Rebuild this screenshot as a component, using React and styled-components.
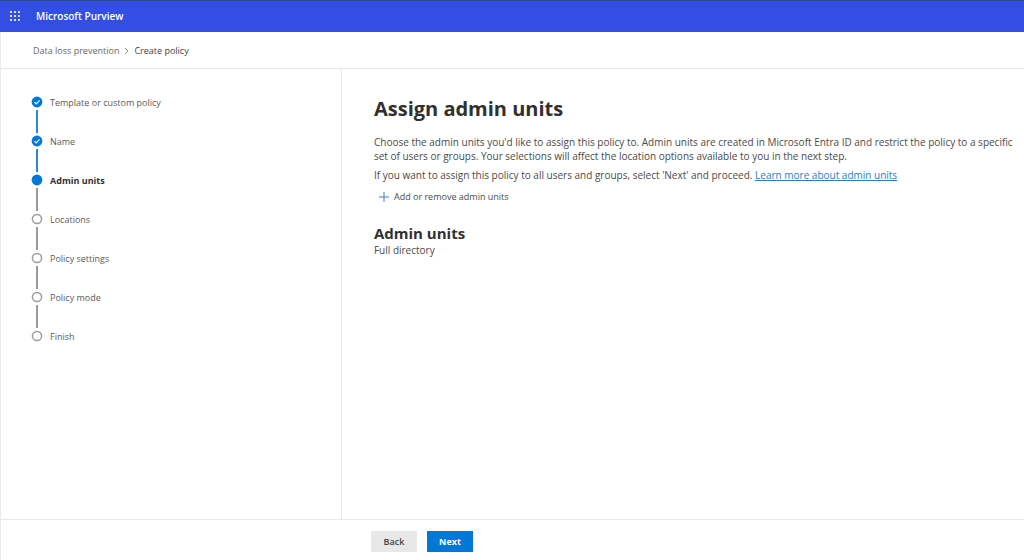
import React from "react"
import styled, { createGlobalStyle } from "styled-components"

const GlobalStyle = createGlobalStyle`
  * {
    box-sizing: border-box;
  }
  body {
    background-color: #fff;
    color: #4c4a47;
    font-family: "Open Sans", "Noto Sans", sans-serif;
    font-size: 10px;
    line-height: 14px;
    margin: 0;
  }
`

const Page = styled.div`
  border-left: 1px solid #ebebeb;
  display: flex;
  flex-direction: column;
  min-height: 100vh;
`

const Header = styled.header`
  align-items: center;
  background-color: #334fe3;
  border-top: 1px solid #2a4a8c;
  color: #fff;
  display: flex;
  gap: 14px;
  height: 32px;
  margin-left: -1px;
  padding: 0 8px 2px;
`

const WaffleButton = styled.button`
  background: none;
  border: 0;
  color: inherit;
  cursor: pointer;
  display: flex;
  padding: 1px;
`

const Brand = styled.span`
  font-size: 10px;
  font-weight: 600;
`

const Breadcrumb = styled.nav`
  align-items: center;
  border-bottom: 1px solid #e9e9e9;
  display: flex;
  font-size: 9px;
  gap: 5px;
  height: 37px;
  padding: 1px 32px 0;
`

const Crumb = styled.a`
  color: ${props => props.$current ? "#44423f" : "#6a6865"};
  text-decoration: none;
`

const Body = styled.div`
  display: flex;
  flex: 1;
`

const Sidebar = styled.aside`
  border-right: 1px solid #e9e9e9;
  flex: 0 0 33.33%;
  padding: 27px 30px;
`

const StepList = styled.ol`
  list-style: none;
  margin: 0;
  padding: 0;
`

const Step = styled.li`
  color: ${props => props.$active ? "#33312f" : "#5c5a57"};
  display: flex;
  font-size: 9px;
  font-weight: ${props => props.$active ? 700 : 400};
  gap: 7px;
`

const Track = styled.div`
  align-items: center;
  display: flex;
  flex-direction: column;
  gap: 2px;
  padding-bottom: 2px;
  svg {
    display: block;
  }
`

const Connector = styled.span`
  background-color: ${props => props.$done ? "#2b87d8" : "#9a9a9a"};
  height: 23px;
  width: 2px;
`

const Main = styled.main`
  flex: 1;
  min-width: 0;
  padding: 26px 8px 26px 32px;
`

const Title = styled.h1`
  color: #32302e;
  font-size: 20px;
  font-weight: 700;
  line-height: 28px;
  margin: 0 0 12px;
`

const Text = styled.p`
  margin: 0 0 5px;
`

const Link = styled.a`
  color: #2b7cc9;
  text-decoration: underline;
`

const AddButton = styled.button`
  align-items: center;
  background: none;
  border: 0;
  color: inherit;
  cursor: pointer;
  display: flex;
  font-family: inherit;
  font-size: 9px;
  gap: 4px;
  line-height: 14px;
  padding: 3px 4px;
`

const Subtitle = styled.h2`
  color: #32302e;
  font-size: 15px;
  font-weight: 700;
  line-height: 20px;
  margin: 16px 0 0;
`

const Footer = styled.footer`
  border-top: 1px solid #e9e9e9;
  display: flex;
  gap: 10px;
  padding: 11px 0 8px calc(33.33% + 29px);
`

const Button = styled.button`
  background-color: ${props => props.$primary ? "#0078d7" : "#e8e8e8"};
  border: 0;
  color: ${props => props.$primary ? "#fff" : "#44423f"};
  cursor: pointer;
  font-family: inherit;
  font-size: 9px;
  font-weight: ${props => props.$primary ? 700 : 600};
  height: 21px;
  min-width: 46px;
  padding: 0 8px;
`

const steps = [
  { label: "Template or custom policy", status: "done" },
  { label: "Name", status: "done" },
  { label: "Admin units", status: "active" },
  { label: "Locations", status: "todo" },
  { label: "Policy settings", status: "todo" },
  { label: "Policy mode", status: "todo" },
  { label: "Finish", status: "todo" }
]

function WaffleIcon() {
  const dots = [1, 5, 9]
  return (
    <svg width="12" height="12" viewBox="0 0 12 12" fill="currentColor">
      {dots.map(y => dots.map(x => (
        <circle key={`${x}-${y}`} cx={x + 1} cy={y + 1} r="1.1" />
      )))}
    </svg>
  )
}

function StepIcon({ status }) {
  if (status === "todo") {
    return (
      <svg width="12" height="12" viewBox="0 0 12 12">
        <circle cx="6" cy="6" r="4.6" fill="#fff" stroke="#9c9c9c" strokeWidth="1.5" />
      </svg>
    )
  }
  return (
    <svg width="12" height="12" viewBox="0 0 12 12">
      <circle cx="6" cy="6" r="5.4" fill="#0078d7" />
      {status === "done" && (
        <path d="M3.4 6.2 5.2 7.9 8.6 4.4" fill="none" stroke="#fff" strokeWidth="1.1" />
      )}
    </svg>
  )
}

function App() {
  return (
    <>
      <GlobalStyle />
      <Page>
        <Header>
          <WaffleButton type="button" aria-label="App launcher">
            <WaffleIcon />
          </WaffleButton>
          <Brand>Microsoft Purview</Brand>
        </Header>
        <Breadcrumb aria-label="Breadcrumb">
          <Crumb href="#dlp">Data loss prevention</Crumb>
          <svg width="5" height="8" viewBox="0 0 5 8">
            <path d="M1 1 4 4 1 7" fill="none" stroke="#8a8886" strokeWidth="0.9" />
          </svg>
          <Crumb href="#create" $current aria-current="page">Create policy</Crumb>
        </Breadcrumb>
        <Body>
          <Sidebar>
            <StepList>
              {steps.map((step, index) => (
                <Step key={step.label} $active={step.status === "active"}>
                  <Track>
                    <StepIcon status={step.status} />
                    {index < steps.length - 1 && <Connector $done={step.status === "done"} />}
                  </Track>
                  {step.label}
                </Step>
              ))}
            </StepList>
          </Sidebar>
          <Main>
            <Title>Assign admin units</Title>
            <Text>
              Choose the admin units you'd like to assign this policy to. Admin units are created in Microsoft Entra ID and restrict the policy to a specific set of users or groups. Your selections will affect the location options available to you in the next step.
            </Text>
            <Text>
              If you want to assign this policy to all users and groups, select 'Next' and proceed. <Link href="#learn">Learn more about admin units</Link>
            </Text>
            <AddButton type="button">
              <svg width="12" height="12" viewBox="0 0 12 12">
                <path d="M6 1V11M1 6H11" fill="none" stroke="#4a7bc4" strokeWidth="1" />
              </svg>
              Add or remove admin units
            </AddButton>
            <Subtitle>Admin units</Subtitle>
            <Text>Full directory</Text>
          </Main>
        </Body>
        <Footer>
          <Button type="button">Back</Button>
          <Button type="button" $primary>Next</Button>
        </Footer>
      </Page>
    </>
  )
}

export default App
